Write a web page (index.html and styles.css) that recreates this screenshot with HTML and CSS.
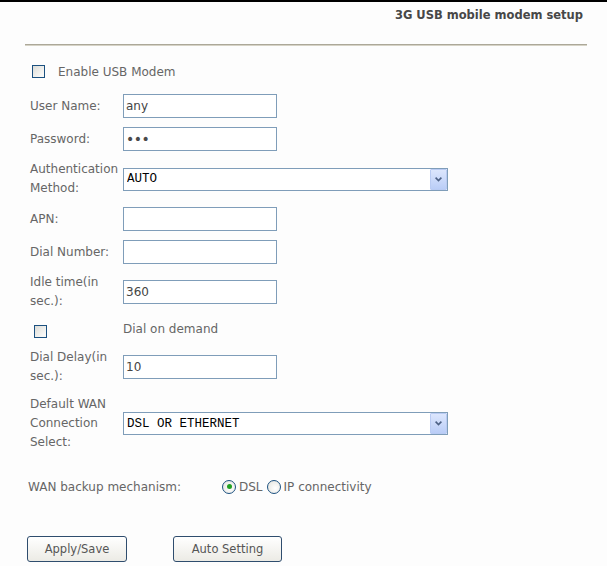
FILE: index.html
```html
<!DOCTYPE html>
<html lang="en">
<head>
  <meta charset="UTF-8" />
  <title>3G USB mobile modem setup</title>
  <link rel="stylesheet" href="styles.css">
</head>
<body>

  <div class="title">3G USB mobile modem setup</div>
  <div class="rule"></div>

  <!-- Enable switch -->
  <label class="enable-row">
    <input type="checkbox" class="xp-check" />
    <span>Enable USB Modem</span>
  </label>

  <!-- Modem settings -->
  <div class="form-grid">
    <label class="lbl">User Name:</label>
    <div><input type="text" class="txt" value="any" /></div>

    <label class="lbl">Password:</label>
    <div><input type="password" class="txt pwd" value="abc" /></div>

    <label class="lbl">Authentication Method:</label>
    <div class="select-wrap">
      <select class="sel">
        <option>AUTO</option>
        <option>PAP</option>
        <option>CHAP</option>
      </select>
      <span class="arrow"><svg width="7" height="5" viewBox="0 0 7 5"><path d="M0.6 0.6 L3.5 3.6 L6.4 0.6" stroke="#4d6185" stroke-width="1.6" fill="none"/></svg></span>
    </div>

    <label class="lbl">APN:</label>
    <div><input type="text" class="txt" value="" /></div>

    <label class="lbl">Dial Number:</label>
    <div><input type="text" class="txt" value="" /></div>

    <label class="lbl">Idle time(in sec.):</label>
    <div><input type="text" class="txt" value="360" /></div>

    <div class="lbl"><input type="checkbox" class="xp-check demand" /></div>
    <div class="plain">Dial on demand</div>

    <label class="lbl">Dial Delay(in sec.):</label>
    <div><input type="text" class="txt" value="10" /></div>

    <label class="lbl">Default WAN Connection Select:</label>
    <div class="select-wrap">
      <select class="sel">
        <option>DSL OR ETHERNET</option>
        <option>3G USB</option>
      </select>
      <span class="arrow"><svg width="7" height="5" viewBox="0 0 7 5"><path d="M0.6 0.6 L3.5 3.6 L6.4 0.6" stroke="#4d6185" stroke-width="1.6" fill="none"/></svg></span>
    </div>
  </div>

  <div class="backup-row">
    <span class="backup-lbl">WAN backup mechanism:</span>
    <input type="radio" name="backup" class="xp-radio" checked />
    <span>DSL</span>
    <input type="radio" name="backup" class="xp-radio second" />
    <span>IP connectivity</span>
  </div>

  <div class="buttons">
    <button class="btn apply">Apply/Save</button>
    <button class="btn auto">Auto Setting</button>
  </div>

</body>
</html>
```

FILE: styles.css
```css
body {
  font-family: 'DejaVu Sans', sans-serif;
  font-size: 12px;
  background: #fdfdfd;
  color: #666;
  margin: 0;
  border-top: 2px solid #000;
}

.title {
  text-align: right;
  font-weight: bold;
  font-size: 11.5px;
  line-height: 16px;
  color: #474747;
  padding: 5px 24px 0 0;
}

.rule {
  margin: 21px 20px 0 25px;
  border-top: 1px solid #aca899;
  border-bottom: 1px solid #d6d3c6;
}

.enable-row {
  display: flex;
  align-items: center;
  height: 19px;
  margin-top: 16px;
  padding-left: 32px;
}

.enable-row span {
  margin-left: 13px;
}

.xp-check {
  appearance: none;
  width: 13px;
  height: 13px;
  margin: 0;
  border: 1px solid #1c5180;
  background: linear-gradient(135deg, #dcdcd7, #f8f8f6 80%);
}

.form-grid {
  display: grid;
  grid-template-columns: 93px auto;
  row-gap: 9px;
  align-items: center;
  margin-top: 13px;
  padding-left: 30px;
}

.lbl {
  line-height: 19px;
  padding-right: 4px;
}

.demand {
  display: block;
  margin: 3px 0 0 4px;
}

.plain {
  line-height: 19px;
}

.txt {
  box-sizing: border-box;
  width: 154px;
  height: 24px;
  margin: 0;
  padding: 0 2px;
  border: 1px solid #7f9db9;
  background: #fff;
  font-family: 'DejaVu Sans', sans-serif;
  font-size: 12px;
  color: #444;
  display: block;
}

.pwd {
  font-size: 14px;
  color: #4a4a4a;
  letter-spacing: -0.5px;
}

.select-wrap {
  position: relative;
  width: 325px;
  height: 23px;
}

.sel {
  appearance: none;
  box-sizing: border-box;
  width: 325px;
  height: 23px;
  margin: 0;
  padding: 0 3px;
  border: 1px solid #7f9db9;
  border-radius: 0;
  background: #fff;
  font-family: 'Liberation Mono', monospace;
  font-size: 12.5px;
  color: #000;
  display: block;
}

.arrow {
  position: absolute;
  top: 1px;
  right: 1px;
  width: 15px;
  height: 19px;
  border: 1px solid #b9cbf3;
  border-radius: 1px;
  background: linear-gradient(#dce6fd, #bacdf7);
  display: flex;
  align-items: center;
  justify-content: center;
  pointer-events: none;
}

.backup-row {
  display: flex;
  align-items: center;
  height: 19px;
  margin-top: 25px;
  padding-left: 28px;
}

.backup-lbl {
  width: 194px;
}

.xp-radio {
  appearance: none;
  width: 14px;
  height: 14px;
  margin: 0 3px 0 0;
  border: 1px solid #1c5180;
  border-radius: 50%;
  background: radial-gradient(circle at 60% 60%, #fff, #e2e2dc);
  position: relative;
}

.xp-radio:checked::after {
  content: "";
  position: absolute;
  left: 3.5px;
  top: 3.5px;
  width: 5px;
  height: 5px;
  border-radius: 50%;
  background: #21a121;
}

.xp-radio.second {
  margin-left: 4px;
}

.buttons {
  display: flex;
  gap: 46px;
  margin-top: 40px;
  padding-left: 27px;
}

.btn {
  height: 26px;
  border: 1px solid #2f4d6e;
  border-radius: 3px;
  background: linear-gradient(#ffffff, #ecebe5);
  font-family: 'DejaVu Sans', sans-serif;
  font-size: 11.5px;
  color: #555;
  padding: 0;
}

.apply {
  width: 100px;
}

.auto {
  width: 109px;
}
```
